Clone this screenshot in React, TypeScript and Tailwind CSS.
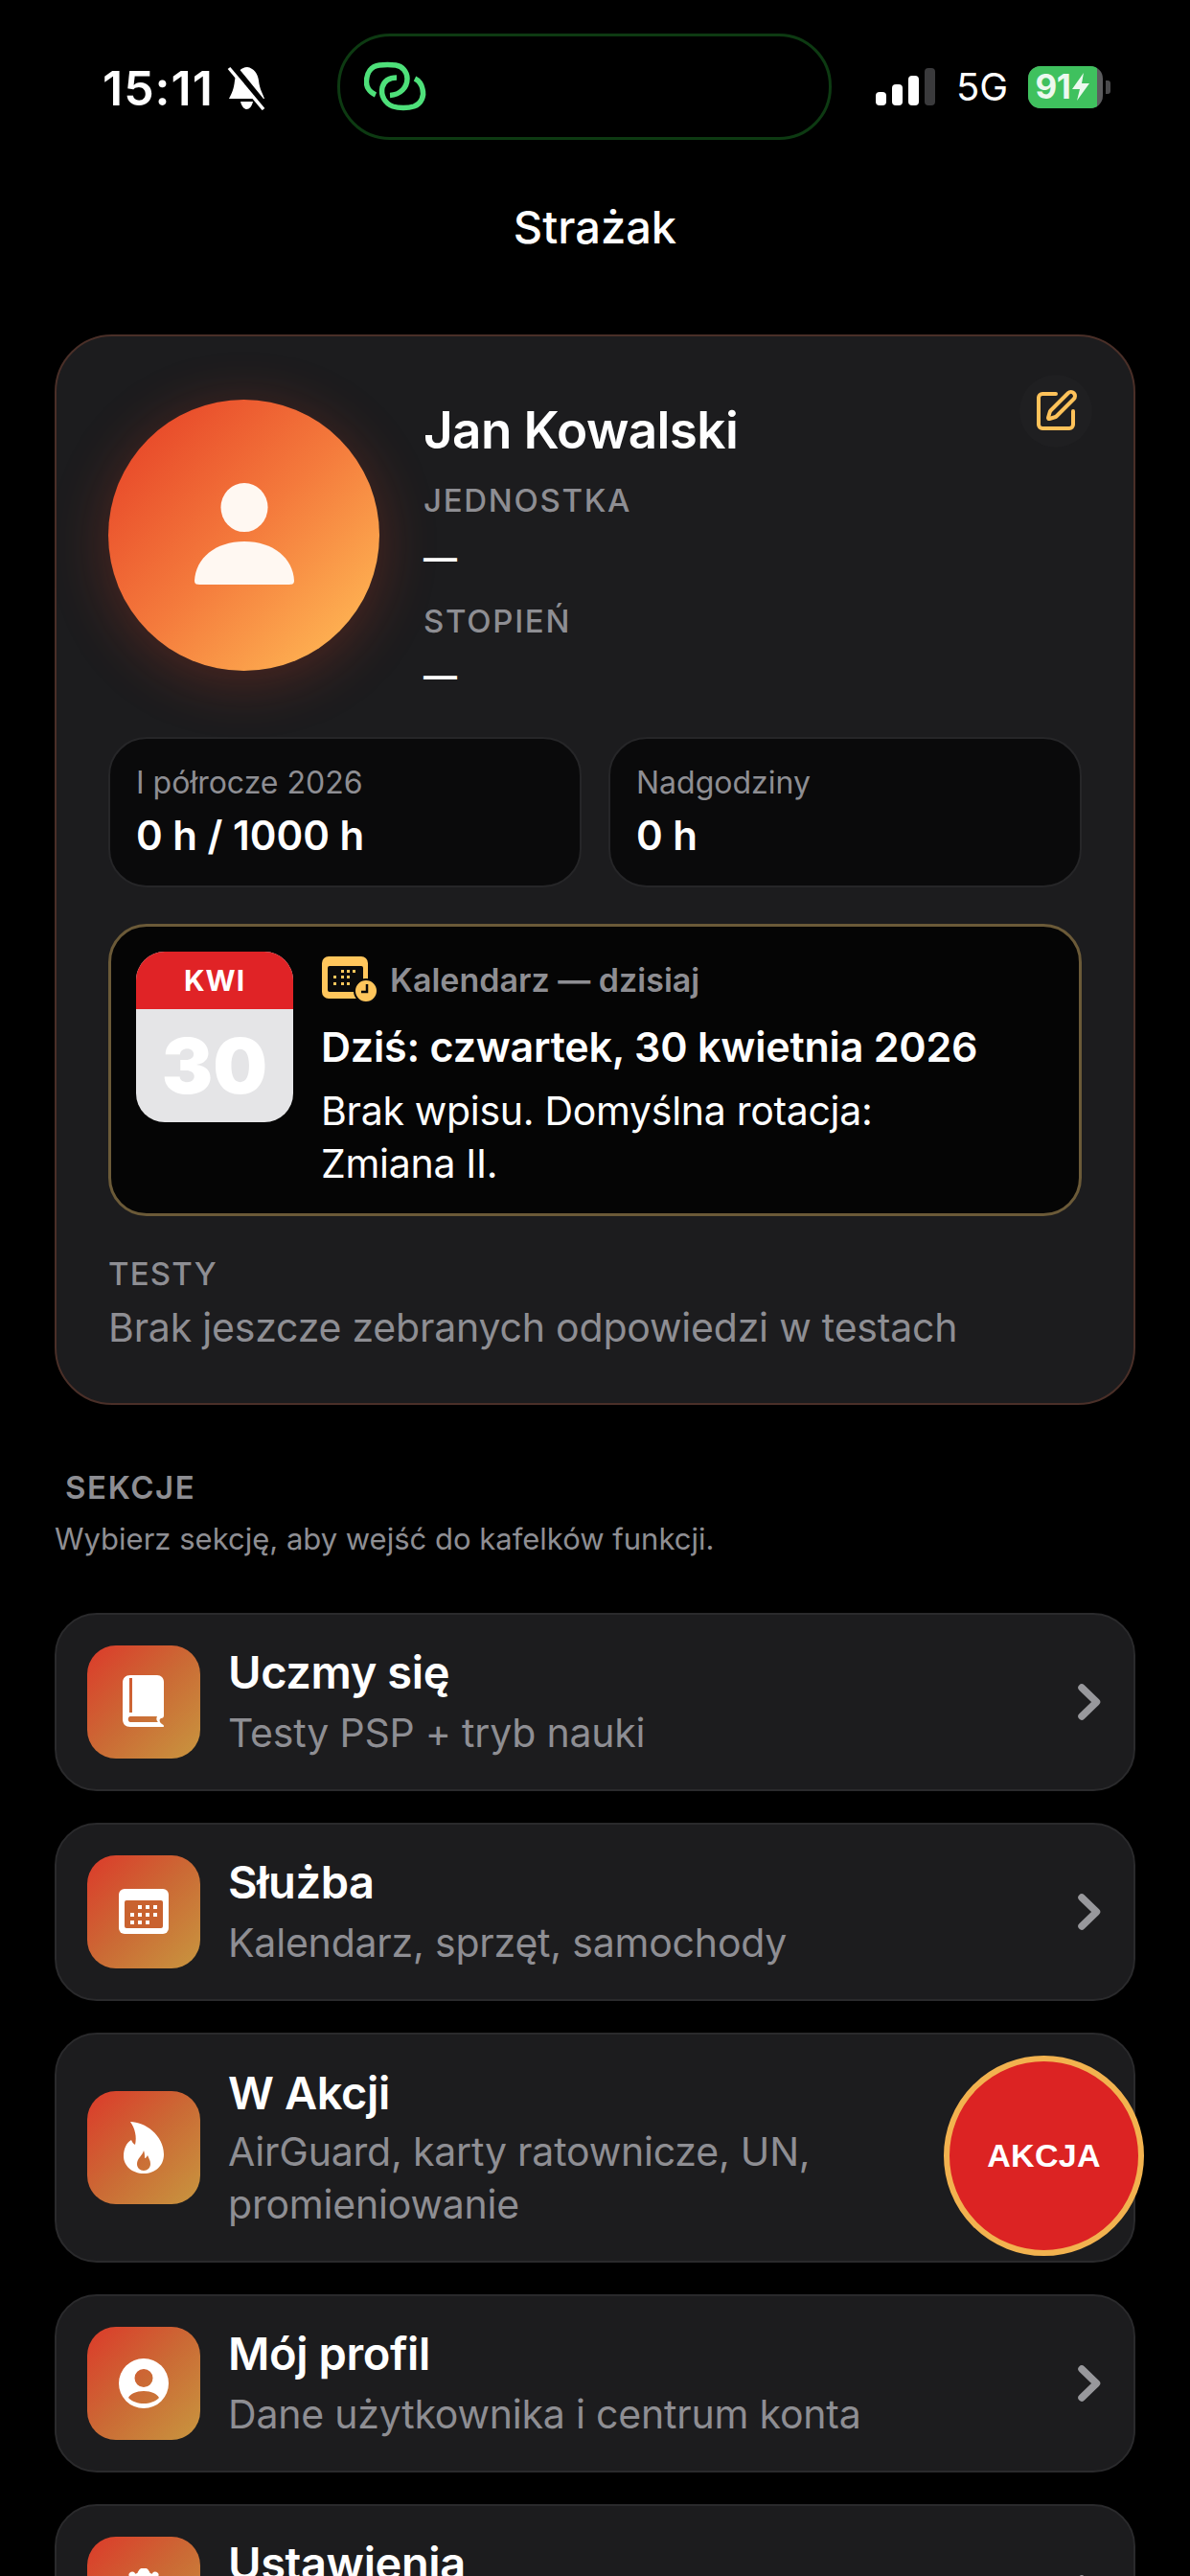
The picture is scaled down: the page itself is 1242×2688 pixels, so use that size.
import { SquarePen } from "lucide-react";
import type { ReactNode } from "react";

function LinkIcon() {
  return (
    <svg width="68" height="54" viewBox="20 14 68 54" fill="none" stroke="#4ee07a" strokeWidth="5.5" strokeLinecap="butt">
      <path d="M32 49 C25 46 22 40 22.5 34 C23 26 27 19 36 18 C41 17.5 48 17.5 53 18 C60 19 65 25 65 32 C65 41 58 49 47 49.5" />
      <path d="M54 31 C46 31 41 34 39 41 C37 50 42 58 50 61 C56 63 66 63 72 61 C80 58 83 50 81 43 C80 38 77 34 73 32" />
    </svg>
  );
}

function StatusBar() {
  return (
    <div className="h-[146px] pt-[35px] pl-[107px] flex items-start">
      <div className="h-[111px] flex items-center w-[245px] shrink-0">
        <span className="w-[129px] shrink-0 text-[50px] leading-none font-semibold text-white tracking-[1px] mt-[2px]">15:11</span>
        <svg width="42" height="46" viewBox="0 0 42 46" className="mt-[2px]">
          <path d="M22 1 C29 2 33 8 34 15 C35 24 38 28 40 34 L3 34 C6 28 8 24 9 15 C10 8 15 1 22 1 Z" fill="#fff" />
          <path d="M15 37 H28 C27 42 24 45 21.5 45 C19 45 16 42 15 37 Z" fill="#fff" />
          <path d="M6 0 L42 44" stroke="#000" strokeWidth="8" />
          <path d="M3 2 L39 45" stroke="#fff" strokeWidth="3.5" />
        </svg>
      </div>
      <div className="w-[516px] h-[111px] shrink-0 rounded-[55px] border-[3px] border-[#0d3a12] bg-black flex items-center pl-[25px]">
        <LinkIcon />
      </div>
      <div className="flex items-center h-[111px] ml-[46px]">
        <div className="flex items-end gap-[6px] h-[39px]">
          <div className="w-[11px] h-[14px] rounded-[4px] bg-white" />
          <div className="w-[11px] h-[22px] rounded-[4px] bg-white" />
          <div className="w-[11px] h-[31px] rounded-[4px] bg-white" />
          <div className="w-[11px] h-[39px] rounded-[4px] bg-[#3a3a3c]" />
        </div>
        <span className="ml-[22px] w-[52px] text-[40px] leading-none font-normal text-white">5G</span>
        <div className="ml-[23px] w-[78px] h-[44px] rounded-[13px] overflow-hidden bg-[#5c5c5e] flex">
          <div className="w-[72px] h-full bg-[#3fc15e] flex items-center justify-center gap-[2px]">
            <span className="text-[35px] leading-none font-bold text-white/90 tracking-[-0.5px]">91</span>
            <svg width="18" height="29" viewBox="0 0 18 29">
              <path d="M12 0 L0 17 H8 L5 29 L18 11 H10 Z" fill="#fff" fillOpacity="0.9" />
            </svg>
          </div>
        </div>
        <div className="w-[5px] h-[14px] ml-[3px] rounded-r-[3px] bg-[#4a4a4c]" />
      </div>
    </div>
  );
}

function Profile() {
  return (
    <div className="flex">
      <div className="relative w-[283px] h-[283px] shrink-0 rounded-full bg-[linear-gradient(135deg,#e84a2a_12%,#f47a3c_50%,#ffb754_92%)] shadow-[0_10px_60px_rgba(225,70,40,0.28)] flex items-center justify-center">
        <svg width="104" height="110" viewBox="0 0 106 112">
          <ellipse cx="53" cy="26" rx="25" ry="26" fill="#fff8f2" />
          <path d="M0 104 C1 80 22 62 53 62 C84 62 105 80 106 104 C106 108 103 108 100 108 H6 C3 108 0 108 0 104 Z" fill="#fff8f2" />
        </svg>
      </div>
      <div className="ml-[46px] flex-1 flex flex-col">
        <div className="text-[53px] leading-[64px] font-semibold text-white tracking-[-0.6px]">Jan Kowalski</div>
        <div className="mt-[21px] text-[33px] leading-[40px] font-medium text-[#8e8e93] tracking-[1.7px]">JEDNOSTKA</div>
        <div className="mt-[12px] text-[35px] leading-[56px] font-semibold text-white">—</div>
        <div className="mt-[18px] text-[33px] leading-[40px] font-medium text-[#8e8e93] tracking-[1.7px]">STOPIEŃ</div>
        <div className="mt-[9px] text-[35px] leading-[56px] font-semibold text-white">—</div>
      </div>
      <div className="relative w-[76px] h-[76px] -mr-[11px] -mt-[26px] rounded-full bg-[#1f1f21] flex items-center justify-center shrink-0">
        <SquarePen size={48} color="#ffc25a" strokeWidth={2} />
      </div>
    </div>
  );
}

function Stat({ label, value }: { label: string; value: string }) {
  return (
    <div className="flex-1 h-[157px] rounded-[40px] bg-[#0a0a0b] border-[2px] border-[#262628] pl-[27px] pt-[25px]">
      <div className="text-[32px] leading-[42px] text-[#8e8e93]">{label}</div>
      <div className="mt-[8px] text-[42px] leading-[52px] font-semibold text-white">{value}</div>
    </div>
  );
}

function CalendarCard() {
  return (
    <div className="mt-[38px] h-[305px] rounded-[40px] bg-[#050505] border-[3px] border-[#6b5a38] pl-[26px] pt-[26px] flex">
      <div className="w-[164px] h-[178px] rounded-[30px] overflow-hidden bg-[#e5e5e7] shrink-0">
        <div className="h-[60px] bg-[#e02326] flex items-center justify-center text-[30px] font-bold text-white tracking-[1px]">KWI</div>
        <div className="h-[118px] flex items-center justify-center text-[80px] leading-none font-black text-white">30</div>
      </div>
      <div className="ml-[29px] flex flex-col">
        <div className="flex items-center h-[52px] mt-[3px]">
          <svg width="60" height="50" viewBox="0 0 60 50">
            <rect x="1" y="1" width="48" height="44" rx="7" fill="#ffc65c" />
            <rect x="7" y="11" width="37" height="27" rx="2" fill="#0a0a0a" />
            <g fill="#ffc65c">
              <rect x="21" y="15" width="3" height="3" />
              <rect x="27" y="15" width="3" height="3" />
              <rect x="33" y="15" width="3" height="3" />
              <rect x="13" y="21" width="3" height="3" />
              <rect x="21" y="21" width="3" height="3" />
              <rect x="27" y="21" width="3" height="3" />
              <rect x="13" y="28" width="3" height="3" />
              <rect x="21" y="28" width="3" height="3" />
              <rect x="27" y="28" width="3" height="3" />
            </g>
            <circle cx="47" cy="37" r="12" fill="#ffc65c" stroke="#0a0a0a" strokeWidth="2" />
            <path d="M48 30 V38 H42" stroke="#0a0a0a" strokeWidth="2.5" fill="none" />
          </svg>
          <span className="ml-[12px] text-[34px] font-semibold text-[#8e8e93]">Kalendarz — dzisiaj</span>
        </div>
        <div className="mt-[16px] text-[43px] leading-[56px] font-semibold text-white tracking-[-0.2px]">Dziś: czwartek, 30 kwietnia 2026</div>
        <div className="mt-[12px] text-[41px] leading-[55px] text-white tracking-[-0.3px]">
          Brak wpisu. Domyślna rotacja:
          <br />
          Zmiana II.
        </div>
      </div>
    </div>
  );
}

function BookIcon() {
  return (
    <svg width="44" height="56" viewBox="0 0 44 56">
      <path fillRule="evenodd" fill="#fff" d="M8 0 H36 C40 0 43 3 43 7 V42 C43 44 42 45 40 45 C38 46 38 49 41 51 C43 52 44 54 42 54 H8 C3 54 0 51 0 46 V8 C0 3 3 0 8 0 Z M7 3 V39 H10 V3 Z M8 43 C5 43 5 49 8 49 H37 C35 47 35 45 36 43 Z" />
    </svg>
  );
}

function CalIcon() {
  return (
    <svg width="52" height="48" viewBox="0 0 52 48">
      <rect width="52" height="47" rx="6" fill="#fff" />
      <rect x="6" y="12" width="40" height="29" rx="2" fill="#c9622f" />
      <g fill="#fff">
        <rect x="20" y="17" width="4" height="4" />
        <rect x="28" y="17" width="4" height="4" />
        <rect x="36" y="17" width="4" height="4" />
        <rect x="12" y="25" width="4" height="4" />
        <rect x="20" y="25" width="4" height="4" />
        <rect x="28" y="25" width="4" height="4" />
        <rect x="36" y="25" width="4" height="4" />
        <rect x="12" y="33" width="4" height="4" />
        <rect x="20" y="33" width="4" height="4" />
        <rect x="28" y="33" width="4" height="4" />
      </g>
    </svg>
  );
}

function FlameIcon() {
  return (
    <svg width="42" height="54" viewBox="0 0 42 54">
      <path fill="#fff" fillRule="evenodd" d="M7 0 C22 0 42 14 42 34 C42 46 33 54 21 54 C9 54 0 46 0 36 C0 28 3 22 8 19 C9 21 10 23 12 24 C14 16 12 7 7 0 Z M21 30 C20 35 14 38 14 44 C14 48 17 51 21 51 C25 51 28 48 28 44 C28 40 26 38 25 35 C24 37 23 38 22 38 C22 35 22 33 21 30 Z" />
    </svg>
  );
}

function PersonIcon() {
  return (
    <svg width="52" height="52" viewBox="0 0 52 52">
      <path fill="#fff" fillRule="evenodd" d="M26 0 A26 26 0 1 1 26 52 A26 26 0 1 1 26 0 Z M26 11 A9.5 9.5 0 1 0 26 30 A9.5 9.5 0 1 0 26 11 Z M26 34 C18 34 12 37 10 41 C14 45 20 47 26 47 C32 47 38 45 42 41 C40 37 34 34 26 34 Z" />
    </svg>
  );
}

function GearIcon() {
  return (
    <svg width="52" height="52" viewBox="0 0 52 52">
      <circle cx="26" cy="26" r="18" fill="none" stroke="#fff" strokeWidth="8" />
      <g stroke="#fff" strokeLinecap="round">
        <path d="M26 6 V12" strokeWidth="13" />
        <path d="M14 7 L16 12" strokeWidth="7" />
        <path d="M38 7 L36 12" strokeWidth="7" />
      </g>
    </svg>
  );
}

function Chevron() {
  return (
    <svg width="24" height="38" viewBox="0 0 24 38" fill="none" className="shrink-0">
      <path d="M4 4 L19.5 19 L4 34" stroke="#98989c" strokeWidth="7.5" strokeLinecap="round" strokeLinejoin="round" />
    </svg>
  );
}

function Row({ icon, title, sub, tall }: { icon: ReactNode; title: string; sub: ReactNode; tall?: boolean }) {
  return (
    <div className={`flex items-center pl-[32px] pr-[34px] rounded-[44px] bg-[#1c1c1e] border-[2px] border-[#2a2a2c] shrink-0 ${tall ? "h-[240px]" : "h-[186px]"}`}>
      <div className="w-[118px] h-[118px] shrink-0 rounded-[30px] bg-[linear-gradient(135deg,#dc3a2a_0%,#cb6a35_50%,#c8963f_100%)] flex items-center justify-center">
        {icon}
      </div>
      <div className="ml-[29px] flex-1">
        <div className="text-[47px] leading-[58px] font-semibold text-white tracking-[-0.4px]">{title}</div>
        <div className={`text-[41px] leading-[55px] text-[#8e8e93] tracking-[-0.2px] ${tall ? "mt-[5px]" : "mt-[7px]"}`}>{sub}</div>
      </div>
      <Chevron />
    </div>
  );
}

export default function App() {
  return (
    <div className="relative w-[1242px] h-[2688px] overflow-hidden bg-black font-['Inter','Liberation_Sans',sans-serif]">
      <StatusBar />
      <div className="mt-[59px] text-center text-[47px] leading-[64px] font-medium text-white">Strażak</div>

      <div className="mx-[57px] mt-[80px] h-[1117px] rounded-[60px] bg-[#1c1c1e] border-[2px] border-[#4a2f28] px-[54px] pt-[66px]">
        <Profile />
        <div className="mt-[36px] flex gap-[28px]">
          <Stat label="I półrocze 2026" value="0 h / 1000 h" />
          <Stat label="Nadgodziny" value="0 h" />
        </div>
        <CalendarCard />
        <div className="mt-[40px] text-[33px] leading-[40px] font-medium text-[#8e8e93] tracking-[1.2px]">TESTY</div>
        <div className="mt-[8px] text-[41px] leading-[56px] text-[#8e8e93] tracking-[-0.2px]">Brak jeszcze zebranych odpowiedzi w testach</div>
      </div>

      <div className="ml-[68px] mt-[64px] text-[33px] leading-[44px] font-semibold text-[#8e8e93] tracking-[1.6px]">SEKCJE</div>
      <div className="ml-[57px] mt-[12px] text-[31px] leading-[40px] text-[#8e8e93]">Wybierz sekcję, aby wejść do kafelków funkcji.</div>

      <div className="mx-[57px] mt-[57px] flex flex-col gap-[33px]">
        <Row icon={<BookIcon />} title="Uczmy się" sub="Testy PSP + tryb nauki" />
        <Row icon={<CalIcon />} title="Służba" sub="Kalendarz, sprzęt, samochody" />
        <Row
          tall
          icon={<FlameIcon />}
          title="W Akcji"
          sub={
            <>
              AirGuard, karty ratownicze, UN,
              <br />
              promieniowanie
            </>
          }
        />
        <Row icon={<PersonIcon />} title="Mój profil" sub="Dane użytkownika i centrum konta" />
        <Row icon={<GearIcon />} title="Ustawienia" sub={"\u00a0"} />
      </div>

      <div className="absolute left-[985px] top-[2145px] w-[209px] h-[209px] rounded-full bg-[#dc2323] border-[6px] border-[#f2b24f] flex items-center justify-center font-['Liberation_Sans',sans-serif] text-[34px] font-bold text-white tracking-[0.3px]">
        AKCJA
      </div>
    </div>
  );
}
